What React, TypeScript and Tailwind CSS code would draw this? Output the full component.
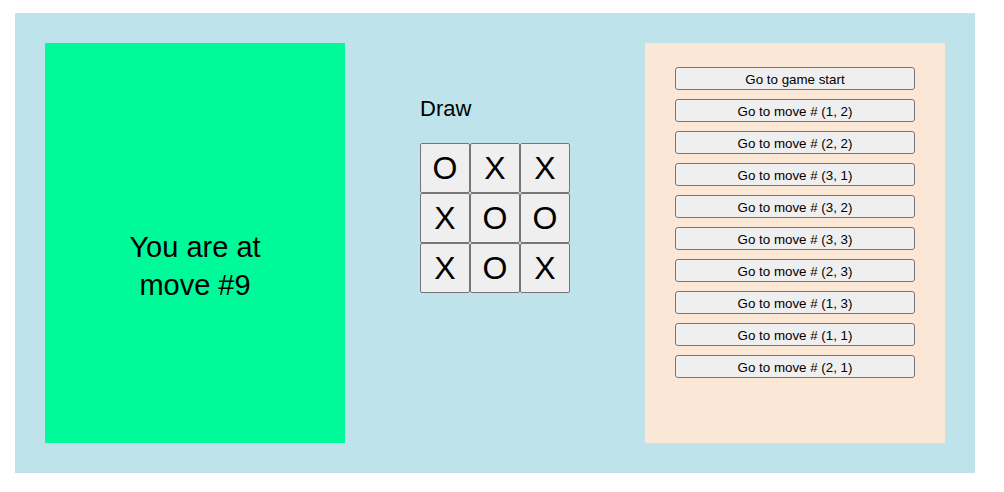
import React from "react";

const board = ["O", "X", "X", "X", "O", "O", "X", "O", "X"];
const moves = [
  "Go to game start",
  "Go to move # (1, 2)",
  "Go to move # (2, 2)",
  "Go to move # (3, 1)",
  "Go to move # (3, 2)",
  "Go to move # (3, 3)",
  "Go to move # (2, 3)",
  "Go to move # (1, 3)",
  "Go to move # (1, 1)",
  "Go to move # (2, 1)",
];

export default function App() {
  return (
    <div className="pt-[13px] pl-[15px]" style={{ fontFamily: '"Liberation Sans", Arial, sans-serif' }}>
      <div className="w-[960px] h-[460px] bg-[#bee3eb] p-[30px] flex text-black">
        <div className="w-[300px] h-[400px] bg-[#00fa9a] flex items-center justify-center pt-[46px]">
          <div className="w-[180px] text-center text-[29px] leading-[38px]">You are at move #9</div>
        </div>
        <div className="w-[300px] flex justify-center pt-[53px]">
          <div className="flex flex-col">
            <div className="text-[22px] leading-[25px] mb-[22px]">Draw</div>
            <div className="grid grid-cols-[50px_50px_50px]">
              {board.map((v, i) => (
                <button
                  key={i}
                  className="w-[50px] h-[50px] bg-[#efefef] border border-[#767676] rounded-[2px] text-[32px] leading-none flex items-center justify-center"
                >
                  {v}
                </button>
              ))}
            </div>
          </div>
        </div>
        <div className="w-[300px] h-[400px] bg-[#fae7d5] px-[30px] pt-[24px] flex flex-col gap-[9px]">
          {moves.map((m) => (
            <button
              key={m}
              className="w-[240px] h-[23px] bg-[#efefef] border border-[#767676] rounded-[3px] text-[13.33px] leading-none flex items-center justify-center pt-[2px]"
            >
              {m}
            </button>
          ))}
        </div>
      </div>
    </div>
  );
}
